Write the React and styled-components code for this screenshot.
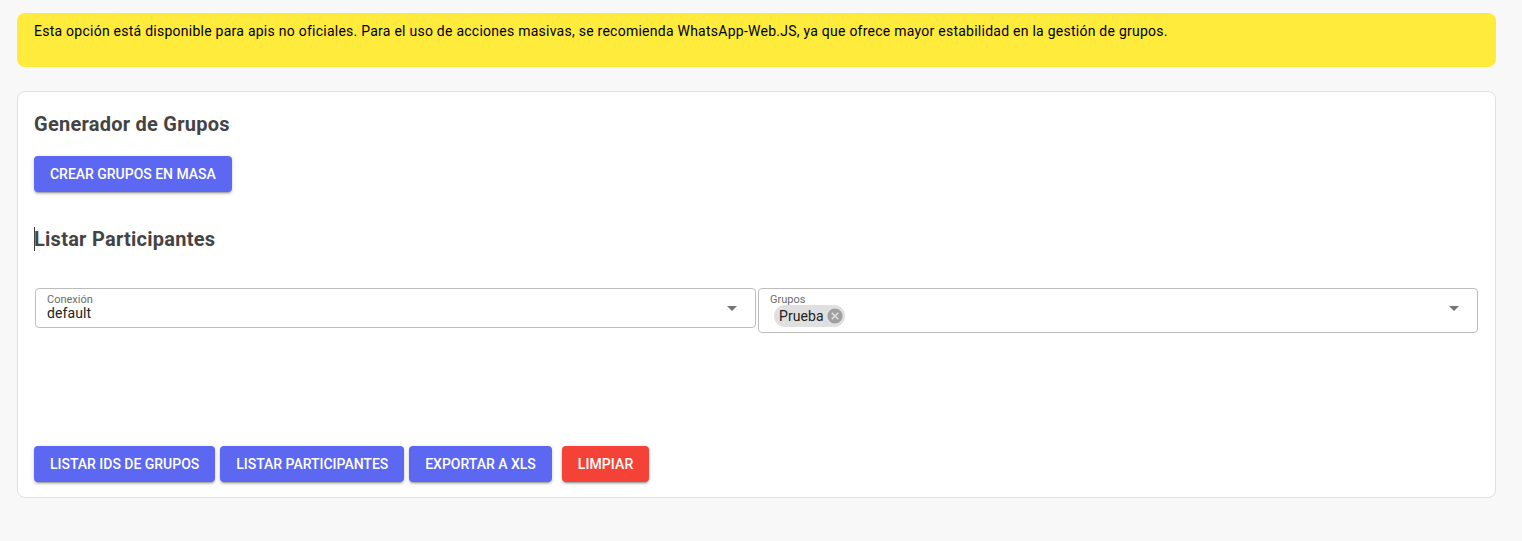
import React from "react";
import styled, { createGlobalStyle } from "styled-components";

const GlobalStyle = createGlobalStyle`
  html, body {
    margin: 0;
    padding: 0;
    background: #f8f8f8;
    font-family: Roboto, "Liberation Sans", sans-serif;
  }
`;

const Page = styled.div`
  box-sizing: border-box;
  width: 1522px;
  height: 541px;
  padding: 13px 26px 0 17px;
  overflow: hidden;
`;

const Notice = styled.div`
  box-sizing: border-box;
  height: 54px;
  padding: 9px 17px;
  background: #ffeb3b;
  border-radius: 8px;
  color: #000;
  font-size: 14px;
  line-height: 18px;
  letter-spacing: 0.25px;
`;

const Card = styled.div`
  box-sizing: border-box;
  height: 407px;
  margin-top: 24px;
  padding: 16px;
  background: #fff;
  border: 1px solid #e0e0e0;
  border-radius: 8px;
  display: flex;
  flex-direction: column;
`;

const Heading = styled.h2`
  margin: 0;
  height: 32px;
  color: #444;
  font-size: 20px;
  font-weight: 700;
  line-height: 32px;
  letter-spacing: 0.25px;
`;

const Caret = styled.span`
  position: absolute;
  left: 0;
  top: 4px;
  width: 1px;
  height: 24px;
  background: #424242;
`;

const SecondHeading = styled(Heading)`
  position: relative;
  margin-top: 31px;
`;

const Button = styled.button`
  box-sizing: border-box;
  height: 36px;
  padding: 0 16px;
  border: 0;
  border-radius: 4px;
  background: ${(p) => (p.$danger ? "#f44336" : "#5c67f2")};
  color: #fff;
  font-family: inherit;
  font-size: 14px;
  font-weight: 500;
  line-height: 36px;
  letter-spacing: -0.02px;
  text-transform: uppercase;
  white-space: nowrap;
  box-shadow: 0 3px 1px -2px rgba(0, 0, 0, 0.2), 0 2px 2px 0 rgba(0, 0, 0, 0.14),
    0 1px 5px 0 rgba(0, 0, 0, 0.12);
`;

const TopAction = styled.div`
  display: flex;
  margin-top: 16px;
`;

const Fields = styled.div`
  display: grid;
  grid-template-columns: 721px 720px;
  column-gap: 2px;
  align-items: start;
  margin: 33px 0 0 1px;
`;

const Field = styled.div`
  box-sizing: border-box;
  position: relative;
  height: ${(p) => p.$height}px;
  padding: 5px 11px 0;
  border: 1px solid #bdbdbd;
  border-radius: 4px;
`;

const FieldLabel = styled.div`
  margin-bottom: -1px;
  color: #6b6b6b;
  font-size: 11px;
  line-height: 12px;
`;

const FieldValue = styled.div`
  color: #212121;
  font-size: 14px;
  line-height: 16px;
  letter-spacing: 0.1px;
`;

const Arrow = styled.span`
  position: absolute;
  right: 18px;
  top: 17px;
  width: 0;
  height: 0;
  border-left: 5px solid transparent;
  border-right: 5px solid transparent;
  border-top: 5px solid #757575;
`;

const Chip = styled.span`
  box-sizing: border-box;
  display: inline-flex;
  align-items: center;
  height: 22px;
  margin: 0 0 0 4px;
  padding: 0 1px 0 5px;
  background: #e0e0e0;
  border-radius: 11px;
  color: #212121;
  font-size: 14px;
  line-height: 22px;
  letter-spacing: 0.1px;
`;

const ChipClose = styled.svg`
  display: block;
  width: 18px;
  height: 18px;
  margin-left: 2px;
  fill: #a0a0a0;
`;

const Actions = styled.div`
  display: flex;
  gap: 5px;
  margin-top: auto;
  margin-bottom: -1px;
`;

const ClearButton = styled(Button)`
  margin-left: 5px;
  letter-spacing: 0.1px;
`;

export default function App() {
  return (
    <>
      <GlobalStyle />
      <Page>
        <Notice>
          Esta opción está disponible para apis no oficiales. Para el uso de acciones masivas, se
          recomienda WhatsApp-Web.JS, ya que ofrece mayor estabilidad en la gestión de grupos.
        </Notice>
        <Card>
          <Heading>Generador de Grupos</Heading>
          <TopAction>
            <Button>Crear grupos en masa</Button>
          </TopAction>
          <SecondHeading>
            <Caret />
            Listar Participantes
          </SecondHeading>
          <Fields>
            <Field $height={40}>
              <FieldLabel>Conexión</FieldLabel>
              <FieldValue>default</FieldValue>
              <Arrow />
            </Field>
            <Field $height={45}>
              <FieldLabel>Grupos</FieldLabel>
              <Chip>
                Prueba
                <ChipClose viewBox="0 0 24 24">
                  <path d="M12 2C6.47 2 2 6.47 2 12s4.47 10 10 10 10-4.47 10-10S17.53 2 12 2zm5 13.59L15.59 17 12 13.41 8.41 17 7 15.59 10.59 12 7 8.41 8.41 7 12 10.59 15.59 7 17 8.41 13.41 12 17 15.59z" />
                </ChipClose>
              </Chip>
              <Arrow />
            </Field>
          </Fields>
          <Actions>
            <Button>Listar IDs de grupos</Button>
            <Button>Listar participantes</Button>
            <Button>Exportar a XLS</Button>
            <ClearButton $danger>Limpiar</ClearButton>
          </Actions>
        </Card>
      </Page>
    </>
  );
}
